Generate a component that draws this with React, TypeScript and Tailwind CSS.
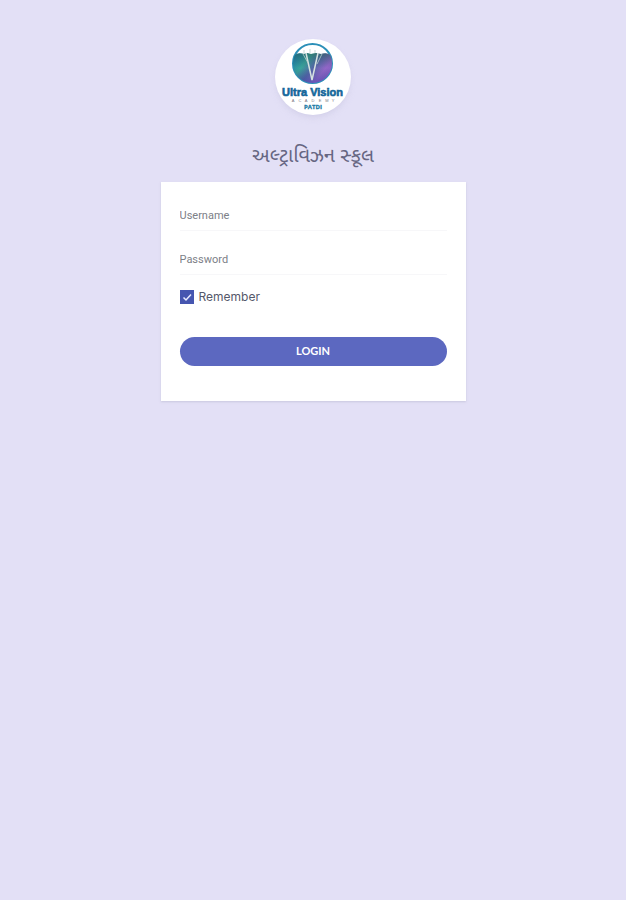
import React from 'react';

const AcademyLogo: React.FC = () => (
  <svg viewBox="0 0 76 76" className="w-full h-full" role="img" aria-label="Ultra Vision Academy">
    <defs>
      <linearGradient id="globe" x1="0" y1="0.2" x2="1" y2="0.8">
        <stop offset="0" stopColor="#1b86ac" />
        <stop offset="0.28" stopColor="#3aa99c" />
        <stop offset="0.5" stopColor="#5569a8" />
        <stop offset="0.75" stopColor="#9868cc" />
        <stop offset="1" stopColor="#825cc4" />
      </linearGradient>
      <linearGradient id="shade" x1="0" y1="0" x2="0" y2="1">
        <stop offset="0" stopColor="#28584f" stopOpacity="0.55" />
        <stop offset="0.5" stopColor="#2c4f78" stopOpacity="0.05" />
        <stop offset="1" stopColor="#3a3fa8" stopOpacity="0.5" />
      </linearGradient>
    </defs>
    <circle cx="37.500" cy="24.500" r="19.500" fill="#fff" stroke="#2b8fb8" strokeWidth="2" />
    <path
      d="M20 16 Q23 13 29 15 L32 14 L36 15 L41 14 L46 15 Q52 13 55 16 A19.500 19.500 0 0 1 37.500 44 A19.500 19.500 0 0 1 20 16Z"
      fill="url(#globe)"
    />
    <path
      d="M20 16 Q23 13 29 15 L32 14 L36 15 L41 14 L46 15 Q52 13 55 16 A19.500 19.500 0 0 1 37.500 44 A19.500 19.500 0 0 1 20 16Z"
      fill="url(#shade)"
    />
    <path d="M31 14 L37 41 L43 14" fill="none" stroke="#d5e2e0" strokeWidth="1.500" />
    <path
      d="M28 15 L33 24 M47 15 L42 25 M29 11 L29 15 M35 10 V14 M40 11 V14"
      fill="none"
      stroke="#b9cfca"
      strokeWidth="0.800"
    />
    <text
      x="37.500"
      y="57"
      textAnchor="middle"
      fontSize="11"
      fontWeight="700"
      fill="#14679a"
      stroke="#14679a"
      strokeWidth="0.600"
      className="font-['Liberation_Sans',sans-serif]"
    >
      Ultra Vision
    </text>
    <g fill="#77777f" fontSize="4" textAnchor="middle" className="font-['Liberation_Sans',sans-serif]">
      <text y="63" x="18 25 31 38 45 52 58">ACADEMY</text>
    </g>
    <text
      x="38"
      y="70"
      textAnchor="middle"
      fontSize="6"
      fontWeight="700"
      fill="#1d7ba6"
      stroke="#1d7ba6"
      strokeWidth="0.300"
      className="font-['Open_Sans','Liberation_Sans',sans-serif]"
    >
      PATDI
    </text>
  </svg>
);

interface LoginFieldProps {
  id: string;
  label: string;
  type: string;
}

const LoginField: React.FC<LoginFieldProps> = ({ id, label, type }) => (
  <input
    id={id}
    name={id}
    type={type}
    placeholder={label}
    aria-label={label}
    className="block w-full h-8 pt-px bg-transparent border-b border-[#f7f7f9] text-[11px] text-gray-700 placeholder:text-[#7c8087] outline-none"
  />
);

const App: React.FC = () => (
  <main className="min-h-screen bg-[#e3e0f6] px-4 pt-[39px] font-[Roboto,'Liberation_Sans',sans-serif]">
    <div className="mx-auto w-full max-w-[305px]">
      <div className="mx-auto size-[76px] rounded-full bg-white shadow-md shadow-[#c9c5e2]/40">
        <AcademyLogo />
      </div>
      <h1 className="mt-[30px] text-center text-[20px] leading-6 text-[#666682] font-['Noto_Sans_Gujarati','Noto_Sans',sans-serif]">
        અલ્ટ્રાવિઝન સ્કૂલ
      </h1>
      <form
        className="mt-[13px] bg-white px-[19px] pt-[17px] pb-[35px] shadow-xs shadow-[#b9b5cf]/60"
        onSubmit={(e) => e.preventDefault()}
      >
        <div className="flex flex-col gap-3">
          <LoginField id="username" label="Username" type="text" />
          <LoginField id="password" label="Password" type="password" />
        </div>
        <label className="mt-[14px] flex items-center gap-[5px] text-[12px] leading-4 text-[#55586a] font-[Inter,sans-serif]">
          <span className="grid size-[14px]">
            <input
              type="checkbox"
              name="remember"
              defaultChecked
              className="peer col-start-1 row-start-1 size-[14px] appearance-none border border-[#4656b0] checked:bg-[#4656b0]"
            />
            <svg
              viewBox="0 0 14 14"
              className="pointer-events-none invisible col-start-1 row-start-1 peer-checked:visible"
              aria-hidden="true"
            >
              <path d="M3.500 7.500 L6 10 L11 4.500" fill="none" stroke="#e8eaff" strokeWidth="1.500" />
            </svg>
          </span>
          Remember
        </label>
        <button
          type="submit"
          className="mt-8 block h-[29px] w-full rounded-full bg-[#5c68c0] text-[11px] font-bold text-white font-[Lato,sans-serif]"
        >
          LOGIN
        </button>
      </form>
    </div>
  </main>
);

export default App;
